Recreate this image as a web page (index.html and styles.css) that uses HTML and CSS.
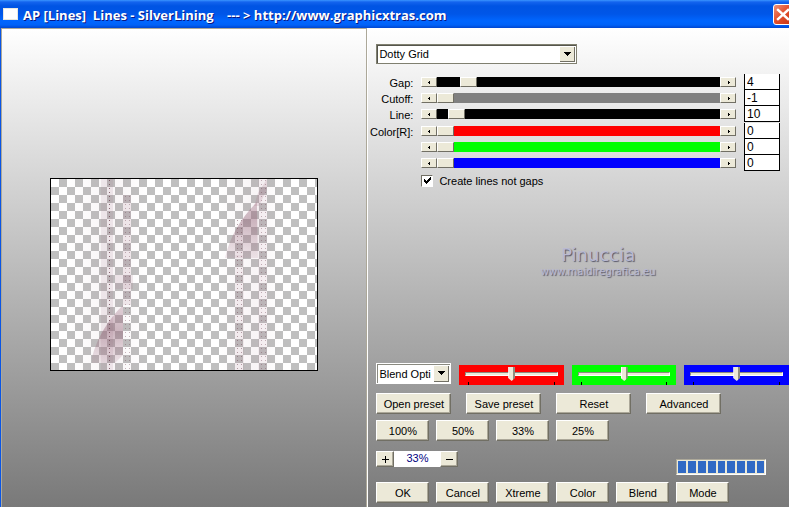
FILE: index.html
```html
<!DOCTYPE html>
<html lang="en">
<head>
<meta charset="utf-8">
<title>AP [Lines] Lines - SilverLining</title>
<link rel="stylesheet" href="styles.css">
</head>
<body>
<header class="titlebar">
  <span class="app-icon"></span>
  <h1 class="title">AP [Lines]&nbsp; Lines - SilverLining&nbsp;&nbsp;&nbsp; --- &gt; http://www.graphicxtras.com</h1>
  <button class="close" type="button" aria-label="Close">
    <svg width="19" height="19" viewBox="0 0 19 19"><path d="M4 5 L14 14 M14 5 L4 14" stroke="#fff" stroke-width="2.4" stroke-linecap="square"/></svg>
  </button>
</header>
<main class="window">
  <section class="preview" aria-label="Preview">
    <svg class="canvas" viewBox="0 0 266 191" width="266" height="191">
      <defs>
        <pattern id="checker" width="16" height="16" patternUnits="userSpaceOnUse">
          <rect width="16" height="16" fill="#fff"/>
          <path d="M8 0h8v8H8zM0 8h8v8H0z" fill="#bfbfbf"/>
        </pattern>
        <pattern id="dots" width="4" height="4" patternUnits="userSpaceOnUse">
          <rect x="2" y="1" width="1" height="1" fill="#704855"/>
        </pattern>
        <linearGradient id="haze">
          <stop offset="0" stop-color="#a06880" stop-opacity="0"/>
          <stop offset=".55" stop-color="#a06880" stop-opacity=".07"/>
          <stop offset="1" stop-color="#a06880" stop-opacity="0"/>
        </linearGradient>
        <linearGradient id="leaf" x2="0" y2="1">
          <stop offset="0" stop-color="#a47488" stop-opacity=".3"/>
          <stop offset=".45" stop-color="#946478" stop-opacity=".45"/>
          <stop offset="1" stop-color="#a47488" stop-opacity=".15"/>
        </linearGradient>
      </defs>
      <rect width="266" height="191" fill="url(#checker)"/>
      <rect x="16" width="80" height="191" fill="url(#haze)"/>
      <rect x="168" width="64" height="191" fill="url(#haze)"/>
      <rect x="50" width="12" height="191" fill="#a47488" opacity=".13"/>
      <rect x="72" y="16" width="8" height="110" fill="#a47488" opacity=".14"/>
      <rect x="64" y="96" width="18" height="14" fill="#a47488" opacity=".15"/>
      <rect x="184" y="76" width="9" height="115" fill="#a47488" opacity=".1"/>
      <rect x="207" width="9" height="191" fill="#a47488" opacity=".07"/>
      <path d="M72 126 Q49 149 41 178 L41 184 L64 184 L72 176Z" fill="url(#leaf)"/>
      <path d="M209 10 L206 23 L207 79 L174 79 Q181 48 206 23Z" fill="url(#leaf)"/>
      <path d="M216 0 L207 14 L203 27 L208 27 L216 10Z" fill="#a47488" opacity=".2"/>
      <rect x="56" width="6" height="191" fill="url(#dots)" opacity=".8"/>
      <rect x="72" y="16" width="8" height="175" fill="url(#dots)" opacity=".4"/>
      <rect x="184" y="40" width="9" height="151" fill="url(#dots)" opacity=".5"/>
      <rect x="207" width="9" height="191" fill="url(#dots)" opacity=".4"/>
    </svg>
  </section>
  <form class="panel">
    <span class="combo combo-style">
      <select aria-label="Style"><option>Dotty Grid</option></select>
    </span>

    <div class="params">
      <div class="param">
        <label for="gap">Gap:</label>
        <span class="scroll"><button class="arrow prev" type="button" aria-label="Decrease"></button><input class="black" id="gap" type="range" min="0" max="48" value="4"><button class="arrow next" type="button" aria-label="Increase"></button></span>
        <input class="value" aria-label="Gap value" value="4">
      </div>
      <div class="param">
        <label for="cutoff">Cutoff:</label>
        <span class="scroll"><button class="arrow prev" type="button" aria-label="Decrease"></button><input class="gray" id="cutoff" type="range" min="-1" max="255" value="-1"><button class="arrow next" type="button" aria-label="Increase"></button></span>
        <input class="value" aria-label="Cutoff value" value="-1">
      </div>
      <div class="param">
        <label for="line">Line:</label>
        <span class="scroll"><button class="arrow prev" type="button" aria-label="Decrease"></button><input class="black" id="line" type="range" min="0" max="255" value="10"><button class="arrow next" type="button" aria-label="Increase"></button></span>
        <input class="value" aria-label="Line value" value="10">
      </div>
      <div class="param param-color">
        <label for="red">Color[R]:</label>
        <span class="scroll"><button class="arrow prev" type="button" aria-label="Decrease"></button><input class="red" id="red" type="range" min="0" max="255" value="0"><button class="arrow next" type="button" aria-label="Increase"></button></span>
        <input class="value" aria-label="Red value" value="0">
      </div>
      <div class="param">
        <label for="green"></label>
        <span class="scroll"><button class="arrow prev" type="button" aria-label="Decrease"></button><input class="green" id="green" aria-label="Green" type="range" min="0" max="255" value="0"><button class="arrow next" type="button" aria-label="Increase"></button></span>
        <input class="value" aria-label="Green value" value="0">
      </div>
      <div class="param">
        <label for="blue"></label>
        <span class="scroll"><button class="arrow prev" type="button" aria-label="Decrease"></button><input class="blue" id="blue" aria-label="Blue" type="range" min="0" max="255" value="0"><button class="arrow next" type="button" aria-label="Increase"></button></span>
        <input class="value" aria-label="Blue value" value="0">
      </div>
    </div>

    <label class="check"><input type="checkbox" checked>Create lines not gaps</label>

    <div class="credit">
      <strong>Pinuccia</strong>
      <span>www.maidiregrafica.eu</span>
    </div>

    <div class="blend">
      <span class="combo combo-blend">
        <select aria-label="Blend options"><option>Blend Options</option></select>
      </span>
      <span class="track red"><input type="range" aria-label="Red balance"></span>
      <span class="track green"><input type="range" aria-label="Green balance"></span>
      <span class="track blue"><input type="range" aria-label="Blue balance"></span>
    </div>

    <div class="row presets">
      <button class="btn" type="button">Open preset</button>
      <button class="btn" type="button">Save preset</button>
      <button class="btn" type="button">Reset</button>
      <button class="btn" type="button">Advanced</button>
    </div>
    <div class="row">
      <button class="btn" type="button">100%</button>
      <button class="btn" type="button">50%</button>
      <button class="btn" type="button">33%</button>
      <button class="btn" type="button">25%</button>
    </div>
    <div class="zoombar">
      <button class="btn step" type="button" aria-label="Zoom in"><svg width="7" height="7"><path d="M0 3h7v1H0zM3 0h1v7H3z"/></svg></button>
      <output class="zoom">33%</output>
      <button class="btn step" type="button" aria-label="Zoom out"><svg width="7" height="7"><path d="M0 3h7v1H0z"/></svg></button>
      <div class="progress" role="progressbar" aria-label="Progress"><i></i><i></i><i></i><i></i><i></i><i></i><i></i><i></i><i></i></div>
    </div>
    <div class="row">
      <button class="btn" type="button">OK</button>
      <button class="btn" type="button">Cancel</button>
      <button class="btn" type="button">Xtreme</button>
      <button class="btn" type="button">Color</button>
      <button class="btn" type="button">Blend</button>
      <button class="btn" type="button">Mode</button>
    </div>
  </form>
</main>
</body>
</html>
```
FILE: styles.css
```css
* { box-sizing: border-box; }

body {
  margin: 0;
  min-height: 100vh;
  display: flex;
  flex-direction: column;
  overflow: hidden;
  font: 11px/14px "Liberation Sans", Arial, sans-serif;
  color: #000;
}

button, input, select { font: inherit; color: inherit; margin: 0; padding: 0; border-radius: 0; }

.titlebar {
  display: flex;
  align-items: center;
  height: 28px;
  padding-left: 3px;
  overflow: hidden;
  background: linear-gradient(#3a95ff 0, #1464ee 2px, #0054e3 6px, #0056e8 14px, #0066ff 21px, #0062f8 25px, #0046d0 28px);
}
.app-icon { width: 15px; height: 12px; margin-right: 5px; background: #fff; border: 1px solid #e8e8e0; }
.title {
  flex: 1;
  margin: 0;
  padding-top: 2px;
  font: bold 13px/16px "Open Sans", "Noto Sans", sans-serif;
  color: #fff;
  white-space: nowrap;
  text-shadow: 1px 1px 0 #0a1883;
}
.close {
  width: 21px;
  height: 21px;
  margin-right: -5px;
  border: 1px solid #fff;
  border-radius: 3px;
  background: linear-gradient(135deg, #f0937a, #e2502d 45%, #c53212);
}
.close svg { display: block; fill: none; }

.window {
  flex: 1;
  display: grid;
  grid-template-columns: 46.5% 1fr;
  border-left: 1px solid #0a55e5;
  background: linear-gradient(#fff, #797979);
}
.preview {
  display: flex;
  align-items: center;
  justify-content: center;
  padding-top: 12px;
  border: 1px solid #aca899;
  border-bottom: 0;
  box-shadow: 1px 0 0 #fff;
}
.canvas { display: block; box-sizing: content-box; border: 1px solid #000; }

.panel { display: flex; flex-direction: column; padding: 16px 9px 4px; min-width: 0; }

.combo { position: relative; display: block; height: 20px; }
.combo select {
  display: block;
  width: 100%;
  height: 100%;
  padding: 0 19px 0 2px;
  appearance: none;
  background: #fff;
  border: 1px solid #808070;
  box-shadow: inset 1px 1px 0 #55554c;
  outline: 0;
}
.combo::after {
  content: "";
  position: absolute;
  top: 2px;
  right: 2px;
  bottom: 2px;
  width: 16px;
  pointer-events: none;
  background: linear-gradient(#000, #000) 5px 6px / 7px 1px no-repeat,
    linear-gradient(#000, #000) 6px 7px / 5px 1px no-repeat,
    linear-gradient(#000, #000) 7px 8px / 3px 1px no-repeat,
    linear-gradient(#000, #000) 8px 9px / 1px 1px no-repeat, #ece9d8;
  box-shadow: inset 1px 1px 0 #fff, inset -1px -1px 0 #716f64;
}
.combo-style { width: 201px; margin-bottom: 10px; }
.combo-blend { width: 75px; height: 21px; }
.combo-blend select { border-color: #fff; box-shadow: inset 1px 1px 0 #8a8a80; }

.param { display: grid; grid-template-columns: 37px 1fr 36px; gap: 8px; height: 16px; }
.param-color { height: 17px; padding-top: 1px; }
.param label { text-align: right; padding-top: 2px; justify-self: end; white-space: nowrap; }
.scroll { display: flex; height: 10px; margin-top: 3px; }
.scroll input { flex: 1; min-width: 0; height: 10px; appearance: none; }
.arrow {
  width: 16px;
  height: 10px;
  border: 1px solid;
  border-color: #fff #716f64 #716f64 #fff;
  background: #ece9d8;
}
.prev { background: linear-gradient(#000, #000) 7px 3px / 1px 1px no-repeat, linear-gradient(#000, #000) 6px 4px / 2px 1px no-repeat, linear-gradient(#000, #000) 7px 5px / 1px 1px no-repeat, #ece9d8; }
.next { background: linear-gradient(#000, #000) 7px 3px / 1px 1px no-repeat, linear-gradient(#000, #000) 7px 4px / 2px 1px no-repeat, linear-gradient(#000, #000) 7px 5px / 1px 1px no-repeat, #ece9d8; }
.scroll input::-webkit-slider-thumb {
  appearance: none;
  width: 17px;
  height: 10px;
  border: 1px solid;
  border-color: #fff #716f64 #716f64 #fff;
  background: #ece9d8;
}
.black { background: #000; }
.gray { background: #808080; }
.red { background: #f00; }
.green { background: #0f0; }
.blue { background: #00f; }
.value {
  width: 36px;
  height: 16px;
  padding: 0 2px;
  border: 1px solid #000;
  border-top: 0;
  background: #fff;
  font-size: 12px;
}

.check { display: flex; align-items: center; gap: 6px; margin: 3px 0 0 45px; width: max-content; }
.check input {
  appearance: none;
  width: 12px;
  height: 12px;
  border: 1px solid;
  border-color: #716f64 #fff #fff #716f64;
  background: #fff;
}
.check input:checked {
  background: linear-gradient(#000, #000) 2px 3px / 1px 3px no-repeat,
    linear-gradient(#000, #000) 3px 4px / 1px 3px no-repeat,
    linear-gradient(#000, #000) 4px 5px / 1px 3px no-repeat,
    linear-gradient(#000, #000) 5px 4px / 1px 3px no-repeat,
    linear-gradient(#000, #000) 6px 3px / 1px 3px no-repeat,
    linear-gradient(#000, #000) 7px 2px / 1px 3px no-repeat,
    linear-gradient(#000, #000) 8px 1px / 1px 3px no-repeat, #fff;
}

.credit {
  flex: 1;
  display: flex;
  flex-direction: column;
  align-items: center;
  justify-content: center;
  margin: 0 0 28px 40px;
  color: #b9b9d2;
  font-family: "DejaVu Sans", sans-serif;
  font-size: 10px;
  text-shadow: 1px 1px 1px #555568;
}
.credit strong { font-size: 18px; line-height: 20px; font-weight: normal; }

.blend {
  display: grid;
  grid-template-columns: 75px repeat(3, 1fr);
  gap: 8px;
  height: 22px;
  margin-right: -9px;
}
.track {
  height: 20px;
  margin-top: 2px;
  padding: 2px 6px 0;
  background-image: linear-gradient(#000, #000), linear-gradient(#000, #000);
  background-size: 1px 3px;
  background-position: 9px 100%, calc(100% - 9px) 100%;
  background-repeat: no-repeat;
}
.track input {
  display: block;
  width: 100%;
  height: 14px;
  appearance: none;
  background: none;
}
.track input::-webkit-slider-runnable-track {
  height: 4px;
  border: 1px solid;
  border-color: #8d8c80 #fff #fff #8d8c80;
  background: #ece9d8;
}
.track input::-webkit-slider-thumb {
  appearance: none;
  width: 7px;
  height: 14px;
  margin-top: -6px;
  background: linear-gradient(90deg, #fff 1px, #ece9d8 1px 5px, #908e80 5px);
  clip-path: polygon(0 0, 100% 0, 100% 11px, 50% 100%, 0 11px);
}

.btn {
  width: 53px;
  height: 21px;
  border: 1px solid;
  border-color: #fff #716f64 #716f64 #fff;
  background: #ece9d8;
  box-shadow: inset -1px -1px 0 #aca899;
}
.row { display: flex; gap: 7px; margin-top: 6px; }
.presets { margin-top: 8px; gap: 15px; }
.presets .btn { width: 75px; }
.zoombar { display: flex; height: 25px; margin-top: 10px; }
.step { width: 18px; height: 16px; }
.step svg { display: block; margin: auto; }
.zoom { width: 46px; height: 16px; background: #fff; color: #000080; text-align: center; }
.progress {
  display: flex;
  gap: 2px;
  width: 90px;
  height: 16px;
  margin: 8px 0 0 218px;
  padding: 1px;
  border: 1px solid;
  border-color: #aca899 #fff #fff #aca899;
  background: #ece9d8;
}
.progress i { flex: 1; background: #316ac5; }
```
